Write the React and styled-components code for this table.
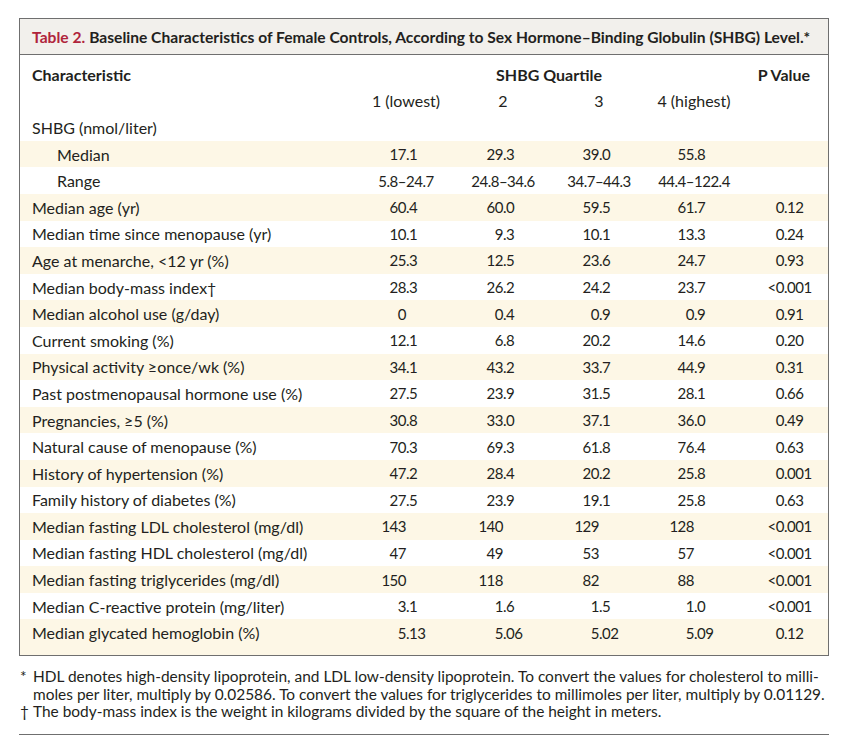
import React from "react";
import styled, { createGlobalStyle } from "styled-components";

const GlobalStyle = createGlobalStyle`
  html, body {
    margin: 0;
    padding: 0;
    background: #ffffff;
  }
  body {
    font-family: Lato, "Open Sans", "Liberation Sans", sans-serif;
    color: #231f20;
  }
`;

const Page = styled.div`
  width: 848px;
  padding: 18px 0 0 19px;
  box-sizing: border-box;
`;

const TableBox = styled.div`
  width: 810px;
  box-sizing: border-box;
  border: 1.5px solid #6f6f6f;
`;

const TitleBar = styled.div`
  height: 35px;
  display: flex;
  align-items: center;
  padding-left: 12px;
  background: #f2f0ec;
  border-bottom: 1.5px solid #6f6f6f;
  font-size: 15.6px;
  font-weight: 700;
  white-space: nowrap;
`;

const TableLabel = styled.span`
  color: #b0243b;
  margin-right: 4px;
`;

const Body = styled.div`
  padding-top: 6px;
`;

const Row = styled.div`
  display: grid;
  grid-template-columns: 325px 98px 96px 96px 94px 86px;
  align-items: center;
  height: 26.6px;
  padding-left: 12px;
  font-size: 16px;
  background: ${(p) => (p.$band ? "#fdf7e6" : "transparent")};

  &:last-child {
    height: 36px;
    padding-bottom: 9px;
    box-sizing: border-box;
  }
`;

const Label = styled.div`
  padding-left: ${(p) => (p.$indent ? "25px" : "0")};
  font-weight: ${(p) => (p.$bold ? 700 : 400)};
  white-space: nowrap;
`;

const HeadCell = styled.div`
  text-align: center;
  font-weight: ${(p) => (p.$bold ? 700 : 400)};
  grid-column: ${(p) => p.$span || "auto"};
  white-space: nowrap;
`;

const RangeCell = styled.div`
  text-align: center;
  font-size: 15px;
  letter-spacing: -0.5px;
  white-space: nowrap;
`;

const NumCell = styled.div`
  display: grid;
  grid-template-columns: 1fr 1fr;
  font-size: 15px;
  letter-spacing: -0.5px;
  white-space: nowrap;
`;

const IntPart = styled.span`
  text-align: right;
`;

const FracPart = styled.span`
  text-align: left;
`;

const Footnotes = styled.div`
  width: 810px;
  padding: 12px 0 13px;
  border-bottom: 1.5px solid #6f6f6f;
  font-size: 15.45px;
  line-height: 17.5px;
`;

const Note = styled.div`
  display: flex;
  white-space: nowrap;
`;

const Mark = styled.span`
  width: 13px;
  flex: none;
  padding-left: 1px;
`;

const Value = ({ v }) => {
  if (v == null) return <div />;
  if (v.includes("–")) return <RangeCell>{v}</RangeCell>;
  const i = v.indexOf(".");
  const int = i === -1 ? v : v.slice(0, i);
  const frac = i === -1 ? "" : v.slice(i);
  return (
    <NumCell>
      <IntPart>{int}</IntPart>
      <FracPart>{frac}</FracPart>
    </NumCell>
  );
};

const rows = [
  { label: "SHBG (nmol/liter)", vals: [] },
  { label: "Median", indent: true, vals: ["17.1", "29.3", "39.0", "55.8"] },
  { label: "Range", indent: true, vals: ["5.8–24.7", "24.8–34.6", "34.7–44.3", "44.4–122.4"] },
  { label: "Median age (yr)", vals: ["60.4", "60.0", "59.5", "61.7", "0.12"] },
  { label: "Median time since menopause (yr)", vals: ["10.1", "9.3", "10.1", "13.3", "0.24"] },
  { label: "Age at menarche, <12 yr (%)", vals: ["25.3", "12.5", "23.6", "24.7", "0.93"] },
  { label: "Median body-mass index†", vals: ["28.3", "26.2", "24.2", "23.7", "<0.001"] },
  { label: "Median alcohol use (g/day)", vals: ["0", "0.4", "0.9", "0.9", "0.91"] },
  { label: "Current smoking (%)", vals: ["12.1", "6.8", "20.2", "14.6", "0.20"] },
  { label: "Physical activity ≥once/wk (%)", vals: ["34.1", "43.2", "33.7", "44.9", "0.31"] },
  { label: "Past postmenopausal hormone use (%)", vals: ["27.5", "23.9", "31.5", "28.1", "0.66"] },
  { label: "Pregnancies, ≥5 (%)", vals: ["30.8", "33.0", "37.1", "36.0", "0.49"] },
  { label: "Natural cause of menopause (%)", vals: ["70.3", "69.3", "61.8", "76.4", "0.63"] },
  { label: "History of hypertension (%)", vals: ["47.2", "28.4", "20.2", "25.8", "0.001"] },
  { label: "Family history of diabetes (%)", vals: ["27.5", "23.9", "19.1", "25.8", "0.63"] },
  { label: "Median fasting LDL cholesterol (mg/dl)", vals: ["143", "140", "129", "128", "<0.001"] },
  { label: "Median fasting HDL cholesterol (mg/dl)", vals: ["47", "49", "53", "57", "<0.001"] },
  { label: "Median fasting triglycerides (mg/dl)", vals: ["150", "118", "82", "88", "<0.001"] },
  { label: "Median C-reactive protein (mg/liter)", vals: ["3.1", "1.6", "1.5", "1.0", "<0.001"] },
  { label: "Median glycated hemoglobin (%)", vals: ["5.13", "5.06", "5.02", "5.09", "0.12"] },
];

const App = () => {
  return (
    <Page>
      <GlobalStyle />
      <TableBox>
        <TitleBar>
          <TableLabel>Table 2.</TableLabel>
          Baseline Characteristics of Female Controls, According to Sex Hormone–Binding Globulin (SHBG) Level.*
        </TitleBar>
        <Body>
          <Row>
            <Label $bold>Characteristic</Label>
            <HeadCell $bold $span="2 / span 4">SHBG Quartile</HeadCell>
            <HeadCell $bold>P Value</HeadCell>
          </Row>
          <Row>
            <div />
            <HeadCell>1 (lowest)</HeadCell>
            <HeadCell>2</HeadCell>
            <HeadCell>3</HeadCell>
            <HeadCell>4 (highest)</HeadCell>
            <div />
          </Row>
          {rows.map((r, idx) => (
            <Row key={r.label} $band={idx % 2 === 1}>
              <Label $indent={r.indent}>{r.label}</Label>
              {[0, 1, 2, 3, 4].map((c) => (
                <Value key={c} v={r.vals[c]} />
              ))}
            </Row>
          ))}
        </Body>
      </TableBox>
      <Footnotes>
        <Note>
          <Mark>*</Mark>
          <span>
            HDL denotes high-density lipoprotein, and LDL low-density lipoprotein. To convert the values for cholesterol to milli-
            <br />
            moles per liter, multiply by 0.02586. To convert the values for triglycerides to millimoles per liter, multiply by 0.01129.
          </span>
        </Note>
        <Note>
          <Mark>†</Mark>
          <span>The body-mass index is the weight in kilograms divided by the square of the height in meters.</span>
        </Note>
      </Footnotes>
    </Page>
  );
};

export default App;
